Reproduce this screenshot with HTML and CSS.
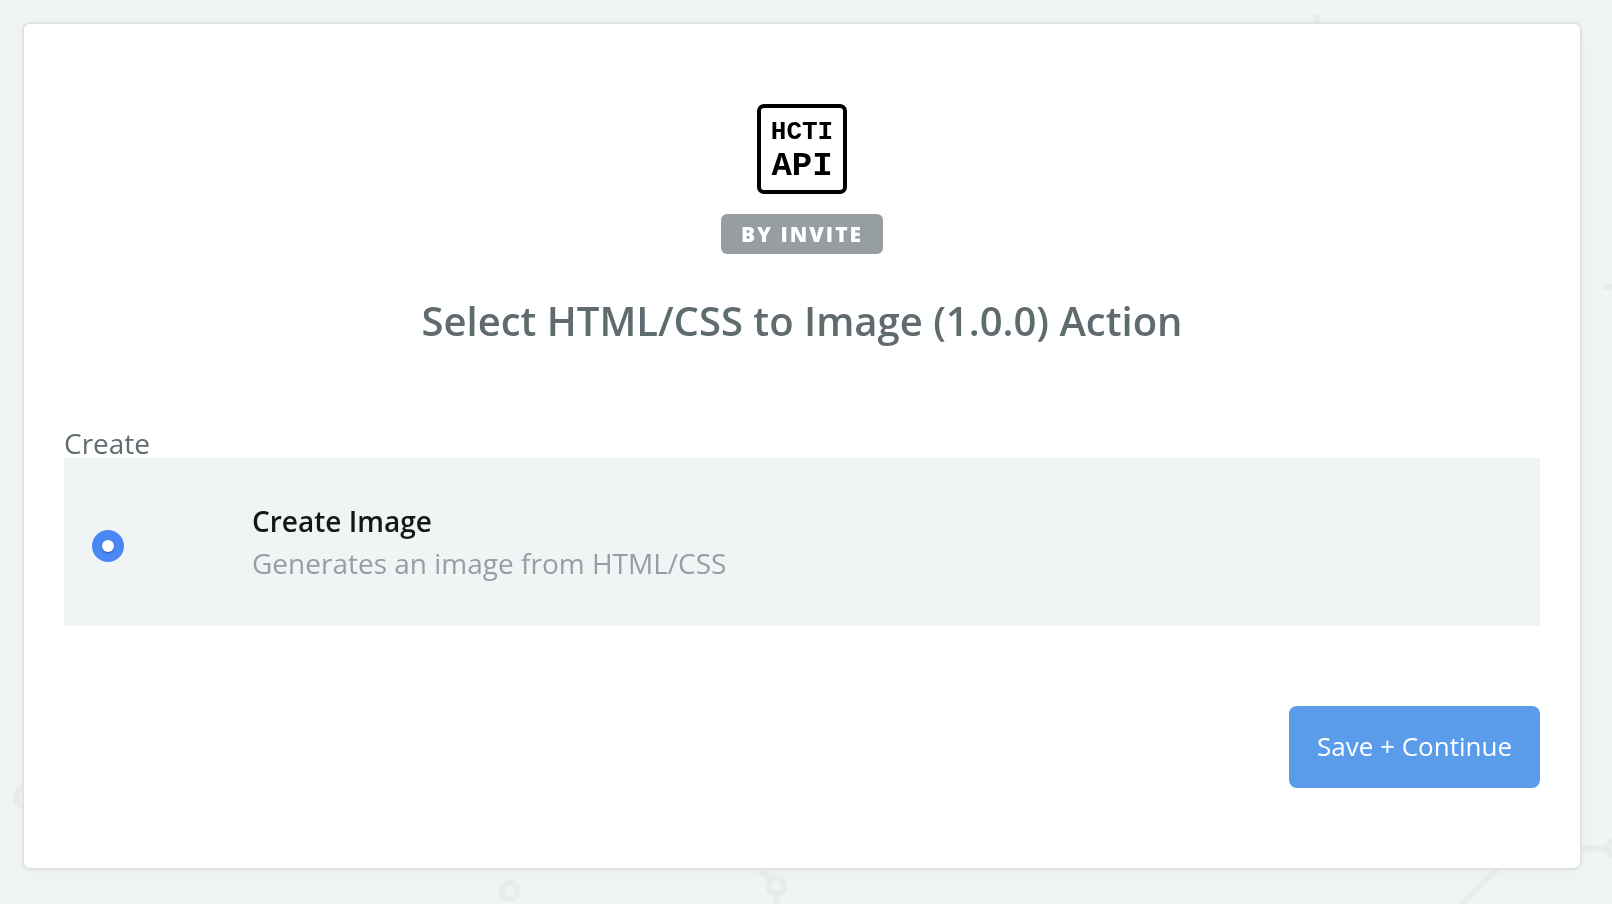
FILE: index.html
```html
<!DOCTYPE html>
<html lang="en">
<head>
<meta charset="utf-8">
<meta name="viewport" content="width=device-width, initial-scale=1">
<title>Select HTML/CSS to Image (1.0.0) Action</title>
<link rel="stylesheet" href="styles.css">
</head>
<body>
<svg class="backdrop" viewBox="0 0 1612 904" preserveAspectRatio="xMidYMid slice" aria-hidden="true">
  <g fill="none" stroke="#e8ecec" stroke-width="6">
    <path d="M1316.500 40V17" stroke-linecap="round"/>
    <path d="M1605 287h12" stroke-linecap="round"/>
    <circle cx="24" cy="797.500" r="8"/>
    <circle cx="509.500" cy="891" r="8"/>
    <circle cx="776.500" cy="886" r="8"/>
    <path d="M771 880l-18-18M776.500 894v14"/>
    <path d="M1570 848.500h38M1510 856l-52 52"/>
    <circle cx="1616" cy="848.500" r="8"/>
  </g>
</svg>
<main class="card">
  <form class="form">
    <header class="header">
      <svg class="logo" viewBox="0 0 90 90" role="img" aria-label="HCTI API">
        <rect x="2" y="2" width="86" height="86" rx="5" fill="#fff" stroke="#000" stroke-width="4"/>
        <text class="logo-text logo-small" x="45" y="35" text-anchor="middle">HCTI</text>
        <text class="logo-text logo-large" x="45" y="71" text-anchor="middle">API</text>
      </svg>
      <span class="badge">BY INVITE</span>
      <h1 class="title">Select HTML/CSS to Image (1.0.0) Action</h1>
    </header>
    <fieldset class="group">
      <legend class="group-name">Create</legend>
      <label class="option">
        <input class="radio" type="radio" name="action" value="create-image" checked>
        <span class="option-text">
          <span class="option-title">Create Image</span>
          <span class="option-description">Generates an image from HTML/CSS</span>
        </span>
      </label>
    </fieldset>
    <div class="actions">
      <button class="button" type="button">Save + Continue</button>
    </div>
  </form>
</main>
</body>
</html>
```

FILE: styles.css
```css
* {
  box-sizing: border-box;
}

body {
  margin: 0;
  min-height: 100vh;
  padding: 22px 30px 34px 22px;
  background: #f0f4f5;
  color: #5f6b6f;
  font-family: "Open Sans", "Noto Sans", sans-serif;
  font-size: 28px;
  line-height: 42px;
}

.backdrop {
  position: fixed;
  inset: 0;
  z-index: -1;
  width: 100%;
  height: 100%;
}

.card {
  padding: 80px 40px;
  border: 2px solid #dfe3e6;
  border-radius: 8px;
  background: #fff;
  box-shadow: 0 2px 16px rgba(0, 0, 0, 0.03);
}

.header {
  display: flex;
  flex-direction: column;
  align-items: center;
}

.logo {
  width: 90px;
  height: 90px;
}

.logo-text {
  font-family: "Courier New", "Liberation Mono", monospace;
  font-weight: 700;
  fill: #000;
}

.logo-small {
  font-size: 26px;
}

.logo-large {
  font-size: 34px;
}

.badge {
  margin-top: 20px;
  padding: 0 20px;
  border-radius: 6px;
  background: #969ea1;
  color: #fff;
  font-size: 21px;
  font-weight: 800;
  letter-spacing: 2px;
  line-height: 40px;
}

.title {
  margin: 40px 0 0;
  font-size: 40px;
  font-weight: 600;
  line-height: 54px;
  text-align: center;
}

.group {
  margin: 80px 0 0;
  padding: 0;
  border: 0;
}

.group-name {
  padding: 0;
  line-height: 30px;
}

.option {
  display: flex;
  align-items: center;
  gap: 128px;
  padding: 42px 28px;
  background: #f0f4f5;
}

.radio {
  appearance: none;
  display: grid;
  place-items: center;
  flex: none;
  width: 32px;
  height: 32px;
  margin: 8px 0 0;
  border-radius: 50%;
  background: #4a88f5;
}

.radio:checked::before {
  content: "";
  width: 12px;
  height: 12px;
  border-radius: 50%;
  background: #fff;
  box-shadow: 0 1px 2px rgba(0, 0, 0, 0.35);
}

.option-text {
  display: flex;
  flex-direction: column;
}

.option-title {
  color: #141617;
  font-weight: 600;
}

.option-description {
  color: #969ea1;
}

.actions {
  display: flex;
  justify-content: flex-end;
  margin-top: 80px;
}

.button {
  padding: 19px 28px 21px;
  border: 0;
  border-radius: 8px;
  background: #5a9bea;
  color: #fff;
  font: inherit;
  font-size: 26px;
  line-height: 42px;
}
```
